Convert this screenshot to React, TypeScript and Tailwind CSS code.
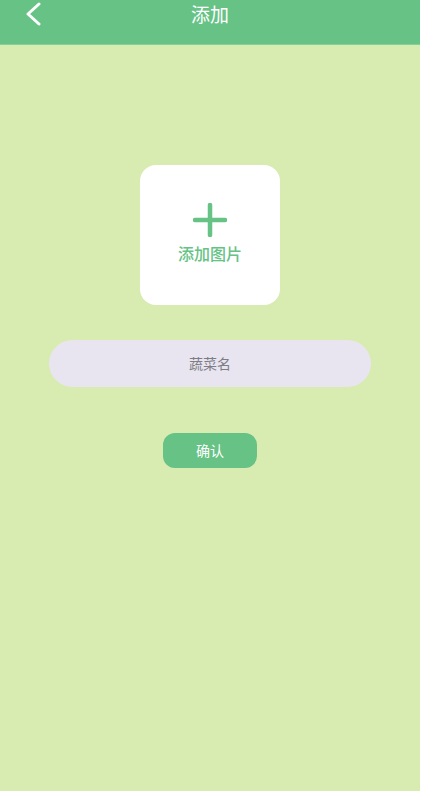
import React from "react";

export default function App() {
  return (
    <div
      className="w-[421px] h-[791px] flex flex-col bg-[#d8ebb1] border-r border-white"
      style={{ fontFamily: '"Noto Sans CJK SC", "Noto Sans", sans-serif' }}
    >
      <div className="relative h-[45px] bg-[#66c285] border-b border-[#7fd39a] flex justify-center">
        <svg
          className="absolute left-[24px] top-[2px]"
          width="20"
          height="24"
          viewBox="0 0 20 24"
          fill="none"
          stroke="white"
          strokeWidth="3"
          strokeLinecap="round"
          strokeLinejoin="round"
        >
          <path d="M15 2 L4 12 L15 22" />
        </svg>
        <div className="text-white text-[19px] leading-[28px]">添加</div>
      </div>
      <div className="flex flex-col items-center">
        <div className="mt-[120px] w-[140px] h-[140px] bg-white rounded-[16px] flex flex-col items-center">
          <svg className="mt-[38px]" width="34" height="34" viewBox="0 0 34 34">
            <path d="M17 2 V32 M2 17 H32" stroke="#66c285" strokeWidth="4.5" strokeLinecap="round" />
          </svg>
          <div className="mt-[4px] text-[16px] leading-[24px] text-[#66c285] font-medium">添加图片</div>
        </div>
        <div className="mt-[35px] w-[322px] h-[47px] rounded-full bg-[#e8e5f0] flex items-center justify-center">
          <span className="text-[14px] text-[#7d7d85]">蔬菜名</span>
        </div>
        <div className="mt-[46px] w-[94px] h-[35px] rounded-[12px] bg-[#66c285] flex items-center justify-center">
          <span className="text-[14px] text-white">确认</span>
        </div>
      </div>
    </div>
  );
}
